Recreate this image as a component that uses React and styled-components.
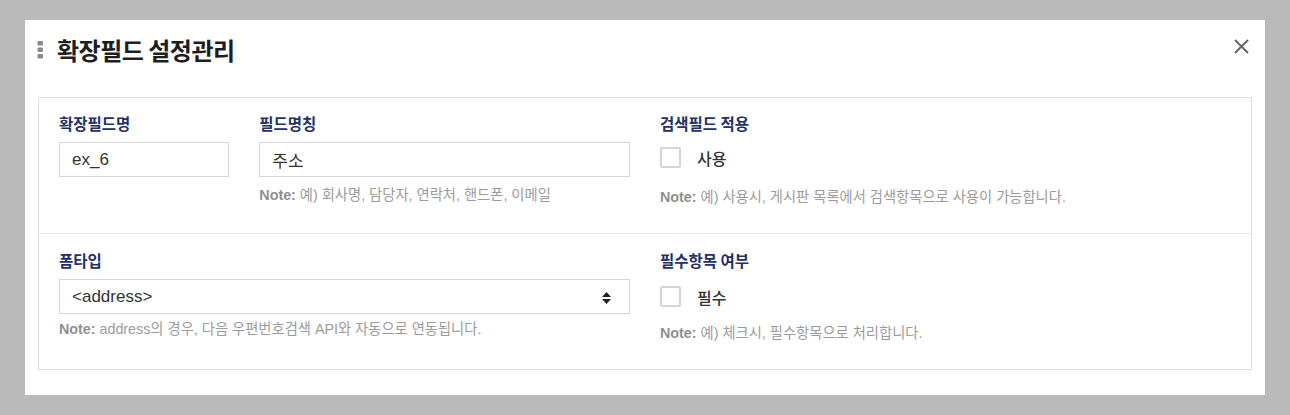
import React from "react";
import styled, { createGlobalStyle } from "styled-components";

const GlobalStyle = createGlobalStyle`
  html, body {
    margin: 0;
    padding: 0;
    background: #bababa;
  }
  body {
    font-family: "Liberation Sans", "Noto Sans CJK KR", sans-serif;
  }
  * {
    box-sizing: border-box;
  }
`;

const Page = styled.div`
  padding: 20px 25px;
  height: 415px;
`;

const Modal = styled.div`
  background: #fff;
  height: 375px;
  display: flex;
  flex-direction: column;
`;

const Header = styled.div`
  height: 60px;
  display: flex;
  align-items: center;
  padding: 0 14px 0 12px;
  gap: 13px;
`;

const Title = styled.h2`
  flex: 1;
  margin: 0;
  font-size: 24px;
  font-weight: 700;
  color: #1e1e1e;
  letter-spacing: -0.5px;
  font-family: "Noto Sans CJK KR", sans-serif;
  line-height: 1;
`;

const CloseButton = styled.button`
  border: 0;
  background: none;
  padding: 0;
  width: 20px;
  height: 20px;
  display: flex;
  align-items: center;
  justify-content: center;
  cursor: pointer;
  margin-bottom: 6px;
`;

const Body = styled.div`
  padding: 18px 13px 25px;
`;

const FieldBox = styled.div`
  border: 1px solid #dcdcdc;
`;

const Row = styled.div`
  display: grid;
  grid-template-columns: 1fr 1fr;
  padding: ${(p) => p.$pad};
  & + & {
    border-top: 1px solid #e6e6e6;
  }
`;

const Col = styled.div`
  padding: 0 15px 0 ${(p) => p.$left || 15}px;
`;

const SubRow = styled.div`
  display: grid;
  grid-template-columns: 1fr 2fr;
  margin: 0 -15px;
`;

const SubCol = styled.div`
  padding: 0 15px;
`;

const Label = styled.div`
  font-family: "Noto Sans CJK KR", sans-serif;
  font-size: 15.5px;
  font-weight: 700;
  line-height: 18px;
  color: #23306a;
  margin-bottom: ${(p) => p.$gap || 8}px;
`;

const TextInput = styled.input`
  display: block;
  width: 100%;
  height: 35px;
  border: 1px solid #d6d6d6;
  padding: 0 12px;
  font-family: "Liberation Sans", "Noto Sans CJK KR", sans-serif;
  font-size: 17px;
  color: #333;
  outline: none;
`;

const SelectBox = styled.div`
  position: relative;
  height: 35px;
  border: 1px solid #d6d6d6;
  display: flex;
  align-items: center;
  padding: 0 12px;
  font-size: 17px;
  color: #333;
`;

const Arrows = styled.svg`
  position: absolute;
  right: 18px;
  top: 12px;
`;

const Note = styled.p`
  margin: ${(p) => p.$top || 9}px 0 0;
  font-size: 14.3px;
  line-height: 18px;
  color: #9b9b9b;

  b {
    font-weight: 700;
    color: #8f8f8f;
  }
`;

const CheckRow = styled.label`
  display: flex;
  align-items: center;
  gap: 16px;
  height: 21px;
  font-family: "Noto Sans CJK KR", sans-serif;
  font-size: 16px;
  font-weight: 500;
  color: #333;
`;

const CheckBox = styled.span`
  width: 21px;
  height: 21px;
  border: 2px solid #d4d4d4;
  border-radius: 2px;
  background: #fff;
`;

const Grip = () => (
  <svg width="7" height="18" viewBox="0 0 7 18">
    <rect x="0.5" y="0" width="5.5" height="4.5" rx="1" fill="#8a8a8a" />
    <rect x="0.5" y="6.5" width="5.5" height="4.5" rx="1" fill="#8a8a8a" />
    <rect x="0.5" y="13" width="5.5" height="4.5" rx="1" fill="#8a8a8a" />
  </svg>
);

const CloseIcon = () => (
  <svg width="17" height="17" viewBox="0 0 17 17">
    <path d="M2 2 L15 15 M15 2 L2 15" stroke="#666" strokeWidth="2" />
  </svg>
);

export default function App() {
  return (
    <>
      <GlobalStyle />
      <Page>
        <Modal>
          <Header>
            <Grip />
            <Title>확장필드 설정관리</Title>
            <CloseButton aria-label="닫기">
              <CloseIcon />
            </CloseButton>
          </Header>
          <Body>
            <FieldBox>
              <Row $pad="16px 0 27px 0">
                <Col $left={20}>
                  <SubRow>
                    <SubCol>
                      <Label $gap={10}>확장필드명</Label>
                      <TextInput defaultValue="ex_6" />
                    </SubCol>
                    <SubCol>
                      <Label $gap={10}>필드명칭</Label>
                      <TextInput defaultValue="주소" />
                      <Note $top={9}>
                        <b>Note:</b> 예) 회사명, 담당자, 연락처, 핸드폰, 이메일
                      </Note>
                    </SubCol>
                  </SubRow>
                </Col>
                <Col>
                  <Label $gap={15}>검색필드 적용</Label>
                  <CheckRow>
                    <CheckBox />
                    사용
                  </CheckRow>
                  <Note $top={20}>
                    <b>Note:</b> 예) 사용시, 게시판 목록에서 검색항목으로 사용이 가능합니다.
                  </Note>
                </Col>
              </Row>
              <Row $pad="17px 0 27px 0">
                <Col $left={20}>
                  <Label $gap={10}>폼타입</Label>
                  <SelectBox>
                    &lt;address&gt;
                    <Arrows width="9" height="12" viewBox="0 0 9 12">
                      <path d="M4.5 0 L9 5 H0 Z M0 7 H9 L4.5 12 Z" fill="#222" />
                    </Arrows>
                  </SelectBox>
                  <Note $top={6}>
                    <b>Note:</b> address의 경우, 다음 우편번호검색 API와 자동으로 연동됩니다.
                  </Note>
                </Col>
                <Col>
                  <Label $gap={17}>필수항목 여부</Label>
                  <CheckRow>
                    <CheckBox />
                    필수
                  </CheckRow>
                  <Note $top={17}>
                    <b>Note:</b> 예) 체크시, 필수항목으로 처리합니다.
                  </Note>
                </Col>
              </Row>
            </FieldBox>
          </Body>
        </Modal>
      </Page>
    </>
  );
}
